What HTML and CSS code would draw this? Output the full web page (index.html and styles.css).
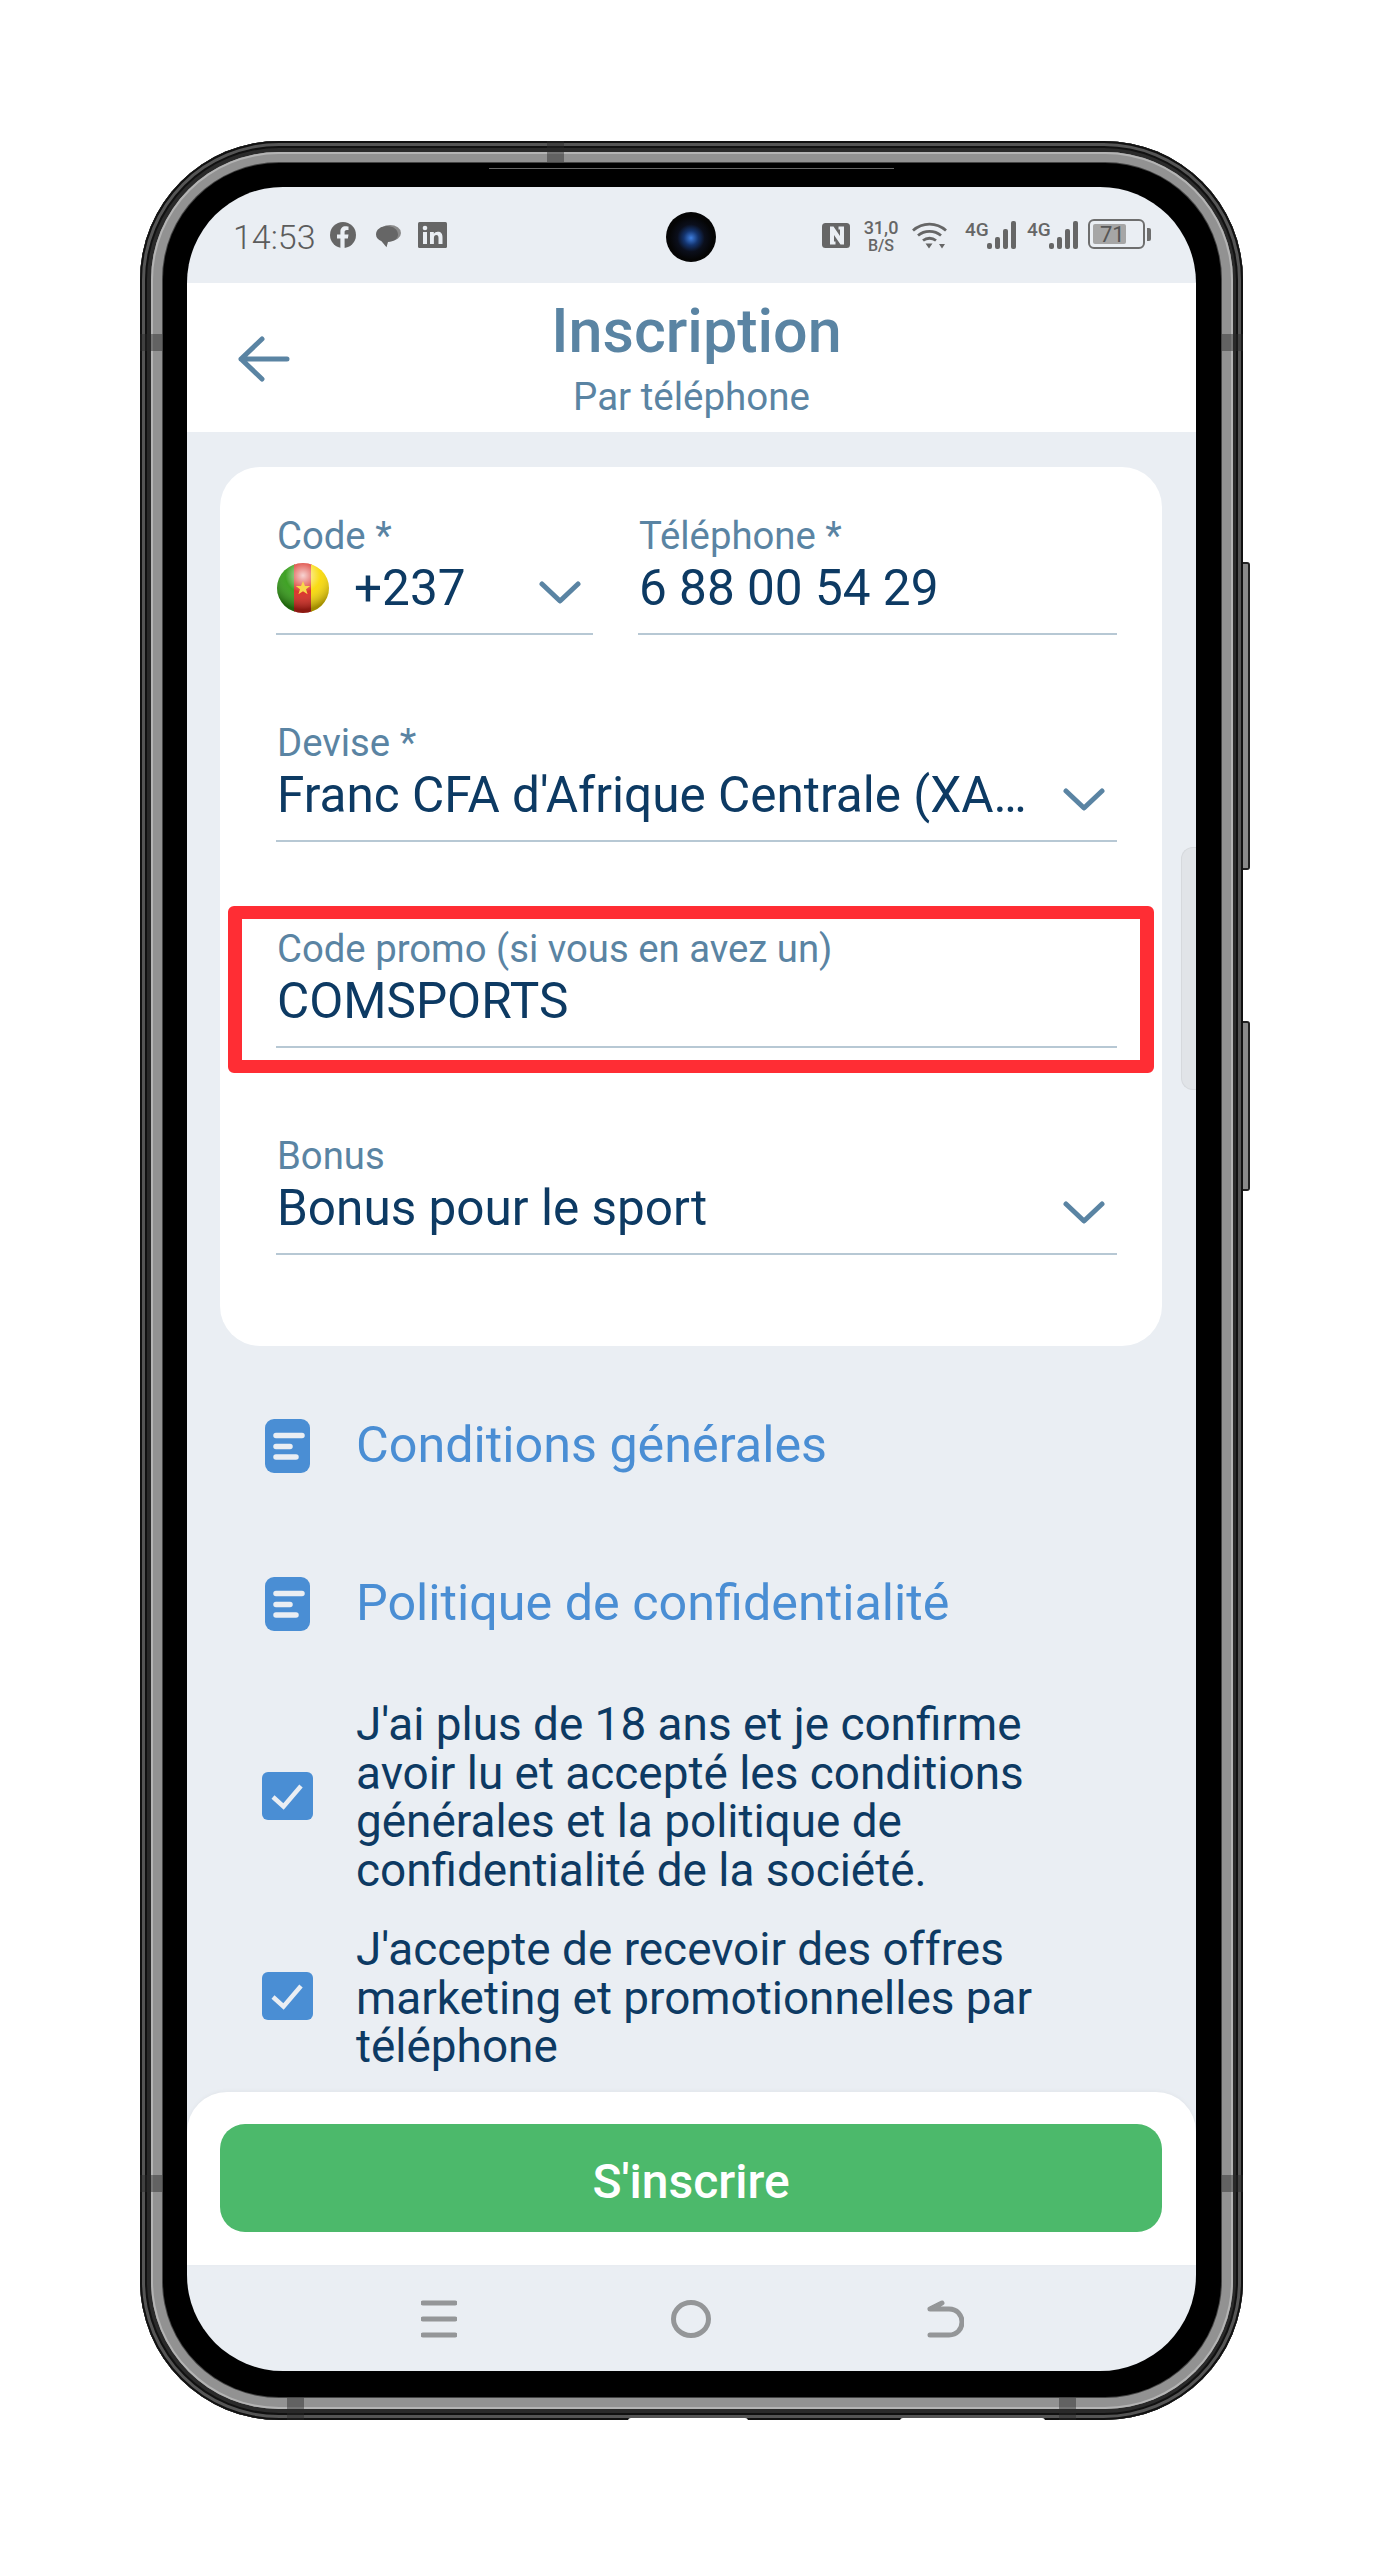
FILE: index.html
```html
<!DOCTYPE html>
<html lang="fr">
<head>
    <meta charset="UTF-8">
    <title>Inscription</title>
    <link rel="stylesheet" href="styles.css">
</head>
<body>

<div class="phone">
    <!-- side keys and antenna marks -->
    <span class="key key-power"></span>
    <span class="key key-volume"></span>
    <span class="mark mark-top"></span>
    <span class="mark mark-left-a"></span>
    <span class="mark mark-left-b"></span>
    <span class="mark mark-right-a"></span>
    <span class="mark mark-right-b"></span>
    <span class="mark mark-bottom-a"></span>
    <span class="mark mark-bottom-b"></span>
    <span class="slot slot-mic"></span>
    <span class="slot slot-speaker"></span>

    <div class="band">
        <div class="bezel">
            <span class="earpiece"></span>
            <div class="screen">
                <span class="camera"></span>
                <span class="edge-tab"></span>

                <div class="statusbar">
                    <div class="status-left">
                        <span class="time">14:53</span>
                        <svg class="st-fb" viewBox="0 0 26 26"><circle cx="13" cy="13" r="13" fill="#666"/><path d="M14.6 26V16.400h3.300l.6-3.900h-3.900V10c0-1.100.5-2.100 2.200-2.100h1.700V4.600s-1.500-.3-3-.3c-3.100 0-5.100 1.900-5.100 5.300v2.900H7v3.900h3.400V26z" fill="#eaeef3"/></svg>
                        <svg class="st-msg" viewBox="0 0 26 26"><ellipse cx="15" cy="10" rx="11" ry="8" fill="#8a8a8a"/><path d="M12 3C6 3 1 6.500 1 11.500c0 3.200 2.200 5.500 5.500 6.700l5 6 1.500-5.300c6-.3 10-3 10-7.400C23 6.500 18 3 12 3z" fill="#666"/></svg>
                        <svg class="st-in" viewBox="0 0 29 26"><rect width="29" height="26" rx="1.500" fill="#666"/><rect x="5" y="10" width="4" height="12" fill="#eaeef3"/><circle cx="7" cy="6" r="2.300" fill="#eaeef3"/><path d="M12 10h3.800v1.800c.8-1.300 2.200-2.100 3.900-2.100 3.400 0 4.800 2 4.800 5.600V22h-4v-6c0-2-.6-3-2.100-3-1.700 0-2.500 1.200-2.500 3v6H12z" fill="#eaeef3"/></svg>
                    </div>
                    <div class="status-right">
                        <svg class="st-nfc" viewBox="0 0 28 25"><rect width="28" height="25" rx="3.500" fill="#666"/><path d="M8 3.500h3.500L18 13V6.500h-1.500v-3H22v18h-3.500L12 12v6.500h1.500v3H8z" fill="#eaeef3"/></svg>
                        <div class="speed"><span>31,0</span><span class="speed-unit">B/S</span></div>
                        <svg class="st-wifi" viewBox="0 0 35 27"><path d="M1 8.500c9.500-8.500 23.500-8.500 33 0M6 13.500c6.500-5.500 16.500-5.500 23 0M11 18.500c3.800-3 9.200-3 13 0" fill="none" stroke="#666" stroke-width="2.800"/><path d="M13.500 21.500h7l-3.500 5zM27 22h6l-3 4.500z" fill="#666"/></svg>
                        <div class="net">
                            <span class="net-label">4G</span>
                            <span class="bars"><i class="b1"></i><i class="b2"></i><i class="b3"></i><i class="b4"></i></span>
                        </div>
                        <div class="net net-second">
                            <span class="net-label">4G</span>
                            <span class="bars"><i class="b1"></i><i class="b2"></i><i class="b3"></i><i class="b4"></i></span>
                        </div>
                        <div class="battery"><span class="battery-fill"></span><span class="battery-text">71</span></div>
                        <span class="battery-tip"></span>
                    </div>
                </div>

                <div class="topbar">
                    <svg class="back" viewBox="0 0 52 46"><path d="M3 23h46M24 3 3 23l21 20" fill="none" stroke="#5a84a3" stroke-width="5" stroke-linecap="round" stroke-linejoin="round"/></svg>
                    <h1>Inscription</h1>
                    <p>Par téléphone</p>
                </div>

                <div class="content">
                    <div class="card">
                        <div class="field-row">
                            <div class="field field-code">
                                <label>Code *</label>
                                <div class="value">
                                    <svg class="flag" viewBox="0 0 52 50">
                                        <defs>
                                            <radialGradient id="gloss" cx="50%" cy="25%" r="68%">
                                                <stop offset="0" stop-color="#fff" stop-opacity=".8"/>
                                                <stop offset=".5" stop-color="#fff" stop-opacity=".08"/>
                                                <stop offset="1" stop-color="#000" stop-opacity=".35"/>
                                            </radialGradient>
                                            <clipPath id="round"><ellipse cx="26" cy="25" rx="26" ry="25"/></clipPath>
                                        </defs>
                                        <g clip-path="url(#round)">
                                            <rect width="18" height="50" fill="#2f9a12"/>
                                            <rect x="17" width="18" height="50" fill="#d8261c"/>
                                            <rect x="34" width="18" height="50" fill="#f8d800"/>
                                            <rect width="52" height="50" fill="url(#gloss)"/>
                                        </g>
                                        <path d="m26 18 2 5h5.200l-4.200 3.200 1.600 5-4.600-3-4.600 3 1.600-5-4.200-3.200H24z" fill="#f9d84a"/>
                                    </svg>
                                    <span>+237</span>
                                    <svg class="chevron" viewBox="0 0 42 24"><path d="m3 3 18 17L39 3" fill="none" stroke="#5a84a3" stroke-width="5" stroke-linecap="round" stroke-linejoin="round"/></svg>
                                </div>
                            </div>
                            <div class="field field-phone">
                                <label>Téléphone *</label>
                                <div class="value"><span>6 88 00 54 29</span></div>
                            </div>
                        </div>

                        <div class="field">
                            <label>Devise *</label>
                            <div class="value">
                                <span>Franc CFA d'Afrique Centrale (XA…</span>
                                <svg class="chevron" viewBox="0 0 42 24"><path d="m3 3 18 17L39 3" fill="none" stroke="#5a84a3" stroke-width="5" stroke-linecap="round" stroke-linejoin="round"/></svg>
                            </div>
                        </div>

                        <div class="field field-promo">
                            <span class="highlight"></span>
                            <label>Code promo (si vous en avez un)</label>
                            <div class="value"><span>COMSPORTS</span></div>
                        </div>

                        <div class="field">
                            <label>Bonus</label>
                            <div class="value">
                                <span>Bonus pour le sport</span>
                                <svg class="chevron" viewBox="0 0 42 24"><path d="m3 3 18 17L39 3" fill="none" stroke="#5a84a3" stroke-width="5" stroke-linecap="round" stroke-linejoin="round"/></svg>
                            </div>
                        </div>
                    </div>

                    <a class="doc-link">
                        <svg class="doc" viewBox="0 0 45 54"><rect width="45" height="54" rx="9" fill="#4a8ed4"/><g fill="none" stroke="#eaeef3" stroke-width="5.500" stroke-linecap="round"><path d="M11 16.500h26M11 27.500h14M11 38h20"/></g></svg>
                        <span>Conditions générales</span>
                    </a>
                    <a class="doc-link">
                        <svg class="doc" viewBox="0 0 45 54"><rect width="45" height="54" rx="9" fill="#4a8ed4"/><g fill="none" stroke="#eaeef3" stroke-width="5.500" stroke-linecap="round"><path d="M11 16.500h26M11 27.500h14M11 38h20"/></g></svg>
                        <span>Politique de confidentialité</span>
                    </a>

                    <div class="consent consent-first">
                        <svg class="check" viewBox="0 0 51 48"><rect width="51" height="48" rx="6" fill="#4a8ed4"/><path d="m11 25 10.500 9.500L39 14" fill="none" stroke="#eaeef3" stroke-width="4.500"/></svg>
                        <p>J'ai plus de 18 ans et je confirme<br>avoir lu et accepté les conditions<br>générales et la politique de<br>confidentialité de la société.</p>
                    </div>
                    <div class="consent">
                        <svg class="check" viewBox="0 0 51 48"><rect width="51" height="48" rx="6" fill="#4a8ed4"/><path d="m11 25 10.500 9.500L39 14" fill="none" stroke="#eaeef3" stroke-width="4.500"/></svg>
                        <p>J'accepte de recevoir des offres<br>marketing et promotionnelles par<br>téléphone</p>
                    </div>
                </div>

                <div class="footer">
                    <button type="button">S'inscrire</button>
                </div>

                <div class="navbar">
                    <svg class="nav-menu" viewBox="0 0 36 38"><path d="M2 3h32M2 19h32M2 35h32" fill="none" stroke="#949698" stroke-width="5" stroke-linecap="round"/></svg>
                    <svg class="nav-home" viewBox="0 0 40 38"><ellipse cx="20" cy="19" rx="17.500" ry="16.500" fill="none" stroke="#949698" stroke-width="5"/></svg>
                    <svg class="nav-back" viewBox="0 0 37 38"><path d="M3 35h19c8 0 13-6 13-13S30 9 22 9H3M3 9l12-6" fill="none" stroke="#949698" stroke-width="5" stroke-linecap="round" stroke-linejoin="round"/></svg>
                </div>
            </div>
        </div>
    </div>
</div>

</body>
</html>
```

FILE: styles.css
```css
* {
    box-sizing: border-box;
}
html, body {
    margin: 0;
    height: 2560px;
    overflow: hidden;
    background-color: #fff;
    font-family: Roboto, "Liberation Sans", sans-serif;
}
body {
    padding: 141px 0 0 140px;
}

/* device frame */
.phone {
    position: relative;
    width: 1103px;
    height: 2279px;
    padding: 11px 10px 11px 11px;
    border-radius: 139px;
    background: #2a2a2a;
    box-shadow: inset 0 0 0 2px #111, inset 0 0 0 5px #555, inset 0 0 0 7px #111;
}
.band {
    height: 100%;
    padding: 11px 12px 12px 12px;
    border-radius: 128px;
    background-color: #929292;
    box-shadow: inset 0 0 0 2px #b4b4b4;
}
.bezel {
    position: relative;
    height: 100%;
    padding: 24px 24px 24px 24px;
    border-radius: 116px;
    background-color: #000;
    box-shadow: 0 0 0 1px #444;
}
.earpiece {
    position: absolute;
    top: 5px;
    left: 326px;
    width: 405px;
    height: 1px;
    background-color: #666;
}
.key {
    position: absolute;
    right: -7px;
    width: 7px;
    background: #8a8a8a;
    border: 2px solid #222;
    border-left: none;
    border-radius: 0 3px 3px 0;
}
.key-power {
    top: 421px;
    height: 308px;
}
.key-volume {
    top: 880px;
    height: 170px;
}
.mark {
    position: absolute;
    background-color: rgba(40, 40, 40, .45);
}
.mark-top {
    top: 0;
    left: 407px;
    width: 17px;
    height: 22px;
}
.mark-left-a, .mark-right-a, .mark-left-b, .mark-right-b {
    width: 22px;
    height: 17px;
}
.mark-left-a {
    left: 0;
    top: 193px;
}
.mark-left-b {
    left: 0;
    top: 2034px;
}
.mark-right-a {
    right: 0;
    top: 193px;
}
.mark-right-b {
    right: 0;
    top: 2034px;
}
.mark-bottom-a, .mark-bottom-b {
    bottom: 0;
    width: 17px;
    height: 22px;
}
.mark-bottom-a {
    left: 147px;
}
.mark-bottom-b {
    left: 919px;
}
.slot {
    position: absolute;
    bottom: -1px;
    height: 3px;
    background-color: #fff;
    border-radius: 3px 3px 0 0;
}
.slot-mic {
    left: 488px;
    width: 120px;
}
.slot-speaker {
    left: 760px;
    width: 145px;
}

.screen {
    position: relative;
    display: flex;
    flex-direction: column;
    width: 1009px;
    height: 2184px;
    border-radius: 96px;
    overflow: hidden;
    background-color: #eaeef3;
}
.camera {
    position: absolute;
    top: 25px;
    left: 479px;
    width: 50px;
    height: 50px;
    border-radius: 50%;
    background: radial-gradient(circle at 50% 52%, #3f7fe0 0, #14346e 20%, #0b0f1c 38%, #050505 60%);
}
.edge-tab {
    position: absolute;
    top: 660px;
    right: 0;
    width: 15px;
    height: 243px;
    background-color: #e1e4e8;
    border: 1px solid #d6d9dd;
    border-right: none;
    border-radius: 12px 0 0 12px;
}

/* status bar */
.statusbar {
    display: flex;
    justify-content: space-between;
    flex: none;
    height: 96px;
    padding: 32px 45px 0 46px;
    color: #666;
}
.status-left, .status-right {
    display: flex;
    align-items: flex-start;
}
.time {
    width: 97px;
    margin-top: -2px;
    font-size: 34px;
    line-height: 40px;
    font-weight: 300;
    color: #5c5c5c;
}
.st-fb {
    width: 26px;
    height: 26px;
    margin-top: 3px;
}
.st-msg {
    width: 26px;
    height: 26px;
    margin: 4px 0 0 19px;
}
.st-in {
    width: 29px;
    height: 26px;
    margin: 3px 0 0 17px;
}
.st-nfc {
    width: 28px;
    height: 25px;
    margin-top: 4px;
}
.speed {
    display: flex;
    flex-direction: column;
    align-items: center;
    width: 36px;
    margin-left: 13px;
    font-size: 18px;
    line-height: 18px;
    font-weight: 500;
}
.speed-unit {
    font-size: 16px;
    line-height: 16px;
    margin-top: 1px;
}
.st-wifi {
    width: 35px;
    height: 27px;
    margin: 3px 0 0 13px;
}
.net {
    position: relative;
    width: 52px;
    height: 30px;
    margin-left: 18px;
}
.net-second {
    margin-left: 10px;
}
.net-label {
    position: absolute;
    top: 0;
    left: 0;
    font-size: 19px;
    line-height: 22px;
    font-weight: 500;
}
.bars {
    position: absolute;
    left: 22px;
    bottom: 0;
    display: flex;
    align-items: flex-end;
    gap: 3px;
}
.bars i {
    width: 5px;
    border-radius: 2px;
    background-color: #666;
}
.b1 {
    height: 6px;
}
.b2 {
    height: 12px;
}
.b3 {
    height: 20px;
}
.b4 {
    height: 28px;
}
.battery {
    position: relative;
    width: 57px;
    height: 30px;
    margin-left: 9px;
    border: 2px solid #6e6e6e;
    border-radius: 6px;
}
.battery-fill {
    position: absolute;
    top: 3px;
    left: 3px;
    width: 33px;
    height: 20px;
    background-color: #a6a6a6;
    border-radius: 2px;
}
.battery-text {
    position: absolute;
    top: 1px;
    left: 10px;
    font-size: 22px;
    line-height: 25px;
    color: #555;
}
.battery-tip {
    width: 4px;
    height: 13px;
    margin: 9px 0 0 2px;
    background-color: #6e6e6e;
    border-radius: 0 2px 2px 0;
}

/* header */
.topbar {
    position: relative;
    flex: none;
    height: 149px;
    padding-top: 15px;
    text-align: center;
    background-color: #fff;
}
.back {
    position: absolute;
    top: 53px;
    left: 51px;
    width: 52px;
    height: 46px;
}
.topbar h1 {
    margin: 0 0 0 10px;
    font-size: 61px;
    line-height: 66px;
    font-weight: 500;
    color: #5a84a3;
}
.topbar p {
    margin: 10px 0 0;
    font-size: 38.500px;
    line-height: 46px;
    color: #5a84a3;
}

/* scrolling part */
.content {
    flex: 1;
    min-height: 0;
    overflow: hidden;
    padding: 35px 34px 0 33px;
}
.card {
    display: flex;
    flex-direction: column;
    gap: 85.500px;
    height: 879px;
    padding: 47px 45px 0 56px;
    background-color: #fff;
    border-radius: 40px;
}
.field-row {
    display: flex;
    gap: 45px;
}
.field {
    position: relative;
    height: 121px;
    border-bottom: 2px solid #b7c8d4;
}
.field-code {
    flex: none;
    width: 317px;
}
.field-phone {
    flex: 1;
}
.field label {
    display: block;
    padding-left: 1px;
    font-size: 38.300px;
    line-height: 44px;
    color: #5a84a3;
}
.value {
    display: flex;
    align-items: center;
    justify-content: space-between;
    height: 60px;
    padding-left: 1px;
    font-size: 49.500px;
    color: #0d3a63;
    white-space: nowrap;
}
.field-code .value {
    justify-content: flex-start;
}
.flag {
    flex: none;
    width: 52px;
    height: 50px;
    margin-right: 25px;
}
.chevron {
    flex: none;
    width: 42px;
    height: 24px;
    margin: 10px 12px 0 0;
}
.field-code .chevron {
    margin-left: auto;
}
.highlight {
    position: absolute;
    top: -21px;
    left: -48px;
    right: -37px;
    bottom: -27px;
    border: solid #ff2d34;
    border-width: 13px 14px;
    border-radius: 6px;
}

.doc-link {
    display: flex;
    align-items: center;
    gap: 46px;
    height: 54px;
    margin: 73px 0 0 45px;
    font-size: 50.300px;
    color: #4a8ed4;
}
.doc-link span {
    margin-top: -3px;
}
.doc-link + .doc-link {
    margin-top: 104px;
}
.doc {
    flex: none;
    width: 45px;
    height: 54px;
}
.consent {
    display: flex;
    align-items: center;
    gap: 43px;
    margin: 31px 0 0 42px;
}
.consent-first {
    margin-top: 69px;
}
.consent p {
    margin: 0;
    font-size: 45.900px;
    line-height: 48.500px;
    color: #0d3a63;
}
.check {
    flex: none;
    width: 51px;
    height: 48px;
    margin-top: -3px;
}

/* bottom */
.footer {
    flex: none;
    height: 173px;
    padding: 32px 34px 0 33px;
    background-color: #fff;
    border-radius: 40px 40px 0 0;
    box-shadow: 0 -1px 4px rgba(0, 0, 0, .04);
}
.footer button {
    display: block;
    width: 100%;
    height: 108px;
    padding: 6px 0 0;
    border: none;
    border-radius: 25px;
    background-color: #4cb96b;
    font-family: inherit;
    font-size: 48px;
    font-weight: 500;
    color: #fff;
}
.navbar {
    position: relative;
    flex: none;
    height: 106px;
}
.navbar svg {
    position: absolute;
    top: 35px;
    height: 38px;
}
.nav-menu {
    left: 234px;
    width: 36px;
}
.nav-home {
    left: 484px;
    width: 40px;
}
.nav-back {
    left: 740px;
    width: 37px;
}
```
